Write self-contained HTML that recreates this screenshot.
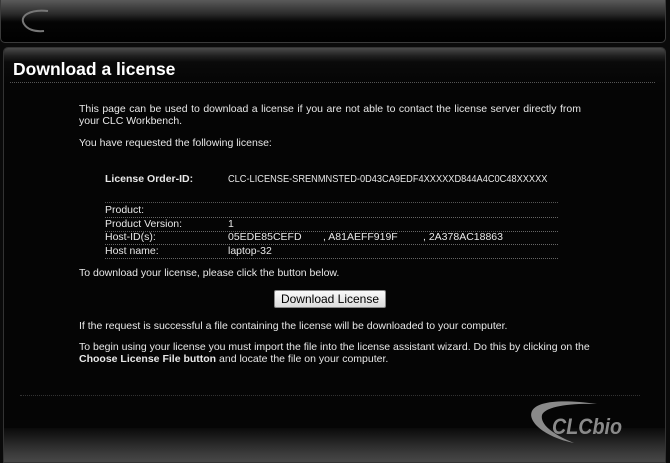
<!DOCTYPE html>
<html><head><style>
*{margin:0;padding:0;box-sizing:border-box}
body{width:670px;height:463px;background:#0a0a0a;overflow:hidden;position:relative;font-family:"Liberation Sans",sans-serif;color:#e8e8e8;font-size:10.5px}
.top{position:absolute;left:0;top:0;width:666px;height:43px;border:1px solid #3a3a3a;border-top:none;border-radius:0 0 5px 5px;background:linear-gradient(#5a5a5a 0px,#2a2a2a 14px,#121212 19px,#050505 22px,#000 43px)}
.panel{position:absolute;left:3px;top:47px;width:663px;height:416px;border:1px solid #333;border-radius:5px 5px 0 0;background:#050505;overflow:hidden}
.tbar{position:absolute;left:0;top:0;width:100%;height:36px;background:linear-gradient(#4a4a4a 0,#202020 8px,#0a0a0a 14px,#050505 36px)}
.dot{position:absolute;border-top:1px dotted #555;height:0}
.foot{position:absolute;left:0;top:380px;width:100%;height:36px;background:linear-gradient(#0a0a0a,#3a3a3a 25px,#4a4a4a)}
h1{position:absolute;left:9px;top:11px;font-size:17.5px;font-weight:bold;color:#fff}
.t{position:absolute;white-space:nowrap}
.j{position:absolute;left:75px;width:502px;text-align:justify;text-align-last:left;line-height:12px}
.row{position:absolute;left:101px;width:453px;height:14px;border-bottom:1px dotted #666}
.row span{position:absolute;top:0}
.btn{position:absolute;left:270px;top:242px;width:112px;height:18px;background:linear-gradient(#fafafa,#dcdcdc);border:1px solid #888;border-radius:2px;color:#000;font-size:12px;text-align:center;line-height:16px}
</style></head><body>
<div class="top"><svg style="position:absolute;left:15px;top:8px" width="40" height="28"><path d="M32 3 C14 1 3 8 8 16 C11 21 18 24 28 23" stroke="#777" stroke-width="2" fill="none"/></svg></div>
<div class="panel">
<div class="tbar"></div>
<h1>Download a license</h1>
<div class="dot" style="left:6px;top:34px;width:645px"></div>
<div class="j" style="top:55px">This page can be used to download a license if you are not able to contact the license server directly from your CLC Workbench.</div>
<div class="t" style="left:75px;top:89px">You have requested the following license:</div>
<div class="t" style="left:101px;top:125px;font-weight:bold">License Order-ID:</div>
<div class="t" style="left:224px;top:125px;transform:scaleX(0.88);transform-origin:0 0">CLC-LICENSE-SRENMNSTED-0D43CA9EDF4XXXXXD844A4C0C48XXXXX</div>
<div class="dot" style="left:101px;top:154px;width:453px"></div>
<div class="row" style="top:156px"><span style="left:0">Product:</span></div>
<div class="row" style="top:170px"><span style="left:0">Product Version:</span><span style="left:123px">1</span></div>
<div class="row" style="top:183px"><span style="left:0">Host-ID(s):</span><span style="left:123px">05EDE85CEFD</span><span style="left:218px">, A81AEFF919F</span><span style="left:318px">, 2A378AC18863</span></div>
<div class="row" style="top:197px"><span style="left:0">Host name:</span><span style="left:123px">laptop-32</span></div>
<div class="t" style="left:75px;top:219px">To download your license, please click the button below.</div>
<div class="btn">Download License</div>
<div class="t" style="left:75px;top:272px">If the request is successful a file containing the license will be downloaded to your computer.</div>
<div class="t" style="left:75px;top:293px">To begin using your license you must import the file into the license assistant wizard. Do this by clicking on the</div>
<div class="t" style="left:75px;top:305px"><b>Choose License File button</b> and locate the file on your computer.</div>
<div class="dot" style="left:16px;top:347px;width:620px;border-color:#333"></div>
<div class="foot"></div>
<svg style="position:absolute;left:518px;top:351px" width="110" height="50"><path d="M75 5 C40 0 15 2 10 12 C5 22 22 38 52 44 C30 35 18 25 20 16 C23 8 45 4 75 5 Z" fill="#8a8a8a"/><text x="30" y="35" font-family="Liberation Sans" font-weight="bold" font-style="italic" font-size="22" fill="#8a8a8a" textLength="70" lengthAdjust="spacingAndGlyphs">CLCbio</text></svg>
</div>
</body></html>
